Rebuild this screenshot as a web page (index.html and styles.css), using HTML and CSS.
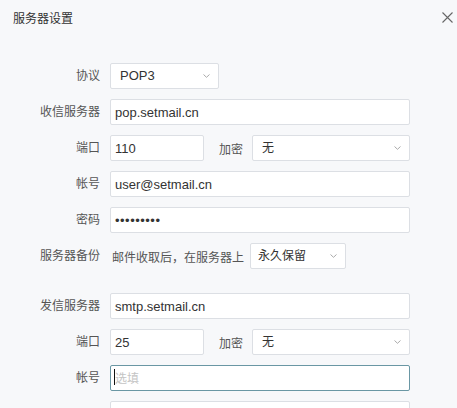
FILE: index.html
```html
<!DOCTYPE html>
<html lang="zh-CN">
<head>
<meta charset="utf-8">
<title>服务器设置</title>
<link rel="stylesheet" href="styles.css">
</head>
<body>
<div class="dialog">
  <div class="header">
    <div class="title">服务器设置</div>
    <svg class="close" width="11" height="11" viewBox="0 0 11 11"><path d="M0.5 0.5L10.5 10.5M10.5 0.5L0.5 10.5" stroke="#666" stroke-width="1.1" fill="none"/></svg>
  </div>
  <div class="form">
    <div class="label">协议</div>
    <div class="field"><div class="select w-proto"><span class="val">POP3</span><svg class="chev" width="7" height="4" viewBox="0 0 7 4"><path d="M0.5 0.5L3.5 3.3L6.5 0.5" stroke="#aaa" fill="none"/></svg></div></div>

    <div class="label">收信服务器</div>
    <div class="field"><input class="input" type="text" value="pop.setmail.cn"></div>

    <div class="label">端口</div>
    <div class="field pair"><input class="input port" type="text" value="110"><span class="sublabel">加密</span><div class="select grow"><span class="val">无</span><svg class="chev" width="7" height="4" viewBox="0 0 7 4"><path d="M0.5 0.5L3.5 3.3L6.5 0.5" stroke="#aaa" fill="none"/></svg></div></div>

    <div class="label">帐号</div>
    <div class="field"><input class="input" type="text" value="user@setmail.cn"></div>

    <div class="label">密码</div>
    <div class="field"><input class="input pwd" type="password" value="123456789"></div>

    <div class="label">服务器备份</div>
    <div class="field pair"><span class="note">邮件收取后，在服务器上</span><div class="select w-keep"><span class="val">永久保留</span><svg class="chev" width="7" height="4" viewBox="0 0 7 4"><path d="M0.5 0.5L3.5 3.3L6.5 0.5" stroke="#aaa" fill="none"/></svg></div></div>

    <div class="spacer"></div>

    <div class="label">发信服务器</div>
    <div class="field"><input class="input" type="text" value="smtp.setmail.cn"></div>

    <div class="label">端口</div>
    <div class="field pair"><input class="input port" type="text" value="25"><span class="sublabel">加密</span><div class="select grow"><span class="val">无</span><svg class="chev" width="7" height="4" viewBox="0 0 7 4"><path d="M0.5 0.5L3.5 3.3L6.5 0.5" stroke="#aaa" fill="none"/></svg></div></div>

    <div class="label">帐号</div>
    <div class="field caret-wrap"><input class="input focused" type="text" placeholder="选填"><span class="caret"></span></div>

    <div class="label"></div>
    <div class="field"><input class="input" type="password" value=""></div>
  </div>
</div>
</body>
</html>
```
FILE: styles.css
```css
html, body {
  margin: 0;
  padding: 0;
  background: #f7f8fa;
  overflow: hidden;
}
body {
  font-family: "Liberation Sans", "Noto Sans CJK SC", sans-serif;
  color: #333;
}
.dialog {
  width: 457px;
  height: 408px;
}
.header {
  display: flex;
  justify-content: space-between;
  align-items: flex-start;
  height: 38px;
  padding: 0 4px 0 13px;
}
.title {
  font-size: 12px;
  line-height: 18px;
  margin-top: 10px;
  color: #333;
}
.close {
  margin-top: 12px;
}
.form {
  margin-top: 25px;
  padding-right: 47px;
  display: grid;
  grid-template-columns: 100px 1fr;
  column-gap: 10px;
  row-gap: 10px;
  align-items: center;
}
.label {
  font-size: 12px;
  color: #555;
  text-align: right;
  line-height: 26px;
  min-height: 26px;
}
.field {
  display: flex;
  align-items: center;
  height: 26px;
}
.input {
  box-sizing: border-box;
  width: 100%;
  height: 26px;
  border: 1px solid #dcdfe4;
  border-radius: 2px;
  background: #fff;
  padding: 0 4px;
  font-family: "Liberation Sans", "Noto Sans CJK SC", sans-serif;
  font-size: 13px;
  color: #333;
  outline: none;
  margin: 0;
}
.input::placeholder {
  color: #c4c4c4;
  font-size: 12px;
}
.input.focused {
  border-color: #6a97a4;
}
.pwd {
  letter-spacing: 0.5px;
}
.port {
  width: 94px;
  flex: none;
}
.sublabel {
  font-size: 12px;
  color: #555;
  margin: 0 9px 0 15px;
}
.note {
  font-size: 12px;
  color: #555;
  margin-left: 2px;
  margin-right: 6px;
}
.select {
  box-sizing: border-box;
  height: 26px;
  border: 1px solid #dcdfe4;
  border-radius: 2px;
  background: #fff;
  display: flex;
  align-items: center;
  justify-content: space-between;
  padding: 0 8px 0 9px;
  font-size: 12px;
  color: #333;
}
.select .val {
  line-height: 24px;
}
.w-proto {
  width: 109px;
  font-size: 13px;
}
.w-keep {
  width: 96px;
  padding-left: 7px;
}
.grow {
  flex: 1;
}
.chev {
  flex: none;
}
.spacer {
  grid-column: 1 / -1;
  height: 4px;
}
.caret-wrap {
  position: relative;
}
.caret {
  position: absolute;
  left: 4px;
  top: 4px;
  width: 1px;
  height: 16px;
  background: #111;
}
```
